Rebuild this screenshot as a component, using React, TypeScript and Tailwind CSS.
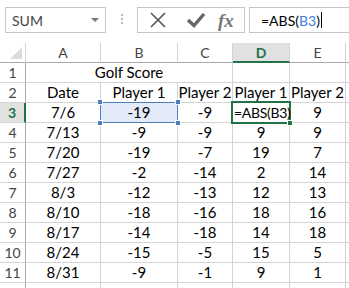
import { Fragment } from 'react';

const rows: [string, string, string, string, string][] = [
  ['7/6', '-19', '-9', '=ABS(B3)', '9'],
  ['7/13', '-9', '-9', '9', '9'],
  ['7/20', '-19', '-7', '19', '7'],
  ['7/27', '-2', '-14', '2', '14'],
  ['8/3', '-12', '-13', '12', '13'],
  ['8/10', '-18', '-16', '18', '16'],
  ['8/17', '-14', '-18', '14', '18'],
  ['8/24', '-15', '-5', '15', '5'],
  ['8/31', '-9', '-1', '9', '1'],
];

const cols = ['A', 'B', 'C', 'D', 'E'];

const cell = 'flex h-[20px] items-center justify-center border-r border-b border-[#d4d4d4]';

function Handle({ className }: { className: string }) {
  return <span className={`absolute h-[6px] w-[6px] border border-white bg-[#4a7ebb] ${className}`} />;
}

export default function App() {
  return (
    <div className="h-[288px] w-[349px] overflow-hidden bg-white font-['Lato','Liberation_Sans',sans-serif] text-[15px] text-black">
      {/* formula bar */}
      <div className="flex h-[43px] items-start pt-[7px]">
        <div className="ml-[5px] flex h-[26px] w-[101px] items-center justify-between border border-[#c6c6c6] pl-[6px] pr-[6px] text-[14px] text-[#444]">
          <span>SUM</span>
          <span className="h-0 w-0 border-x-[4px] border-t-[4px] border-x-transparent border-t-[#777]" />
        </div>
        <div className="ml-[15px] mt-[7px] flex flex-col gap-[2px]">
          <span className="h-[2px] w-[2px] bg-[#bbb]" />
          <span className="h-[2px] w-[2px] bg-[#bbb]" />
          <span className="h-[2px] w-[2px] bg-[#bbb]" />
        </div>
        <div className="ml-[14px] flex h-[26px] w-[108px] items-center border border-[#c6c6c6]">
          <svg width="40" height="24" viewBox="0 0 40 24" className="ml-[1px]">
            <path d="M12 5 L26 19 M26 5 L12 19" stroke="#555" strokeWidth="1.6" fill="none" />
          </svg>
          <svg width="36" height="24" viewBox="0 0 36 24">
            <path d="M9 12 L15 17.5 L25 6" stroke="#666" strokeWidth="3.4" fill="none" strokeLinejoin="miter" />
          </svg>
          <span className="ml-[3px] font-['Liberation_Serif',serif] text-[19px] font-bold italic leading-none text-[#777]">fx</span>
        </div>
        <div className="ml-[4px] flex h-[26px] flex-1 items-center border border-r-0 border-[#c6c6c6] pl-[11px] text-[14px]">
          <span>=ABS(</span>
          <span className="text-[#3b7ddd]">B3</span>
          <span>)</span>
          <span className="ml-[1px] h-[16px] w-[1px] bg-black" />
        </div>
      </div>

      {/* sheet grid */}
      <div className="grid grid-cols-[26px_75px_77px_55px_57px_56px_1fr]">
        <div className="relative h-[20px] border-r border-b border-r-[#d4d4d4] border-b-[#ababab]">
          <span className="absolute bottom-[3px] right-[3px] h-0 w-0 border-b-[12px] border-l-[12px] border-b-[#dcdcdc] border-l-transparent" />
        </div>
        {cols.map((c) =>
          c === 'D' ? (
            <div
              key={c}
              className="flex h-[20px] items-center justify-center border-r border-b-2 border-r-[#d4d4d4] border-b-[#217346] bg-[#e1e1e1] text-[14px] font-bold text-[#217346]"
            >
              {c}
            </div>
          ) : (
            <div
              key={c}
              className="flex h-[20px] items-center justify-center border-r border-b border-r-[#d4d4d4] border-b-[#ababab] text-[14px] text-[#444]"
            >
              {c}
            </div>
          )
        )}
        <div className="h-[20px] border-b border-[#ababab]" />

        {/* row 1 */}
        <div className="flex h-[20px] items-center justify-center border-r border-b border-r-[#ababab] border-b-[#d4d4d4] text-[14px] text-[#444]">
          1
        </div>
        <div className={`${cell} col-span-3`}>Golf Score</div>
        <div className={cell} />
        <div className={cell} />
        <div className="h-[20px] border-b border-[#d4d4d4]" />

        {/* row 2 */}
        <div className="flex h-[20px] items-center justify-center border-r border-b border-r-[#ababab] border-b-[#d4d4d4] text-[14px] text-[#444]">
          2
        </div>
        <div className={cell}>Date</div>
        <div className={cell}>Player 1</div>
        <div className={cell}>Player 2</div>
        <div className={cell}>Player 1</div>
        <div className={cell}>Player 2</div>
        <div className="h-[20px] border-b border-[#d4d4d4]" />

        {rows.map((r, i) => {
          const n = i + 3;
          const active = n === 3;
          return (
            <Fragment key={n}>
              {active ? (
                <div className="flex h-[20px] items-center justify-center border-r-2 border-b border-r-[#217346] border-b-[#d4d4d4] bg-[#e1e1e1] text-[14px] font-bold text-[#217346]">
                  {n}
                </div>
              ) : (
                <div className="flex h-[20px] items-center justify-center border-r border-b border-r-[#ababab] border-b-[#d4d4d4] text-[14px] text-[#444]">
                  {n}
                </div>
              )}
              <div className={cell}>{r[0]}</div>
              {active ? (
                <div className={`${cell} relative bg-[#e3ebf8]`}>
                  <span className="absolute inset-[-1px] border border-[#4a7ebb]" />
                  <Handle className="left-[-4px] top-[-4px]" />
                  <Handle className="right-[-4px] top-[-4px]" />
                  <Handle className="bottom-[-4px] left-[-4px]" />
                  <Handle className="bottom-[-4px] right-[-4px]" />
                  <span className="relative">{r[1]}</span>
                </div>
              ) : (
                <div className={cell}>{r[1]}</div>
              )}
              <div className={cell}>{r[2]}</div>
              {active ? (
                <div className={`${cell} relative justify-start`}>
                  <span className="absolute inset-[-2px] border-2 border-[#217346]" />
                  <span className="relative whitespace-nowrap pl-[1px] text-[14px] tracking-[-0.3px]">{r[3]}</span>
                  <span className="absolute bottom-[-4px] right-[-4px] h-[6px] w-[6px] border border-white bg-[#217346]" />
                </div>
              ) : (
                <div className={cell}>{r[3]}</div>
              )}
              <div className={cell}>{r[4]}</div>
              <div className="h-[20px] border-b border-[#d4d4d4]" />
            </Fragment>
          );
        })}

        <div className="h-[20px] border-r border-[#ababab]" />
        <div className="h-[20px] border-r border-[#d4d4d4]" />
        <div className="h-[20px] border-r border-[#d4d4d4]" />
        <div className="h-[20px] border-r border-[#d4d4d4]" />
        <div className="h-[20px] border-r border-[#d4d4d4]" />
        <div className="h-[20px] border-r border-[#d4d4d4]" />
        <div className="h-[20px]" />
      </div>
    </div>
  );
}
